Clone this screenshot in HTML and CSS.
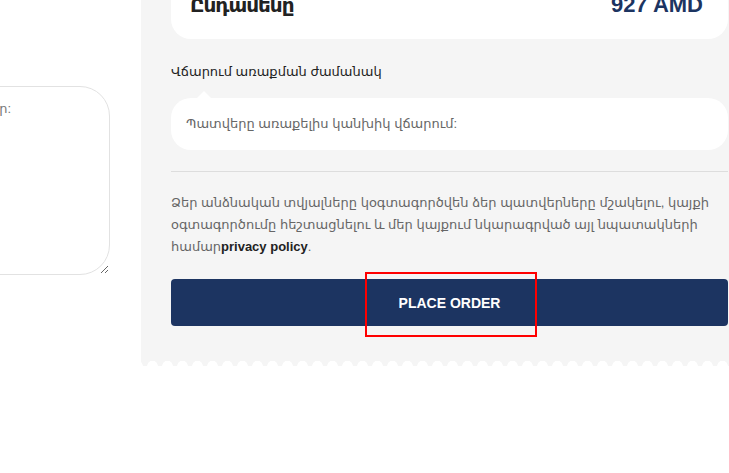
FILE: index.html
```html
<!DOCTYPE html>
<html lang="hy">
<head>
    <meta charset="UTF-8">
    <title>Checkout</title>
    <link rel="stylesheet" href="styles.css">
</head>
<body>
    <div class="checkout">
        <div class="notes-col">
            <textarea class="notes" placeholder="Պատվերի նշումներ:"></textarea>
        </div>
        <div class="summary">
            <div class="total-card">
                <span class="total-label">Ընդամենը</span>
                <span class="total-value">927 AMD</span>
            </div>
            <div class="pay-label">Վճարում առաքման ժամանակ</div>
            <div class="pay-bubble">Պատվերը առաքելիս կանխիկ վճարում:</div>
            <hr class="divider">
            <p class="privacy">Ձեր անձնական տվյալները կօգտագործվեն ձեր պատվերները մշակելու, կայքի օգտագործումը հեշտացնելու և մեր կայքում նկարագրված այլ նպատակների համար<b>privacy policy</b>.</p>
            <button class="place-order">PLACE ORDER</button>
            <div class="scallop"></div>
        </div>
    </div>
    <div class="highlight"></div>
</body>
</html>
```
FILE: styles.css
```css
body {
    margin: 0;
    background: #fff;
    font-family: "Liberation Sans", "DejaVu Sans", sans-serif;
    overflow: hidden;
}
.checkout {
    display: flex;
    align-items: flex-start;
}
.notes-col {
    width: 141px;
    flex-shrink: 0;
    padding-top: 86px;
}
.notes {
    display: block;
    margin-left: -160px;
    width: 270px;
    height: 189px;
    box-sizing: border-box;
    border: 1px solid #e2e2e2;
    border-radius: 30px;
    padding: 14px 98px 14px 20px;
    text-align: right;
    font-family: "Liberation Sans", "DejaVu Sans", sans-serif;
    font-size: 13px;
    color: #666;
    outline: none;
}
.notes::placeholder {
    color: #777;
}
.summary {
    flex: 1;
    background: #f5f5f5;
    padding: 0 1px 0 30px;
    position: relative;
}
.total-card {
    display: flex;
    justify-content: space-between;
    align-items: baseline;
    margin-top: -27px;
    padding: 20px 25px 22px 19px;
    background: #fff;
    border-radius: 20px;
    line-height: 24px;
    font-weight: bold;
}
.total-label {
    font-size: 20px;
    letter-spacing: -1px;
    color: #222;
}
.total-value {
    font-size: 22px;
    color: #1c3461;
}
.pay-label {
    margin-top: 23px;
    font-size: 13px;
    line-height: 20px;
    color: #222;
}
.pay-bubble {
    position: relative;
    margin-top: 16px;
    padding: 16px 15px;
    background: #fff;
    border-radius: 20px;
    font-size: 13px;
    line-height: 20px;
    color: #666;
}
.pay-bubble::before {
    content: "";
    position: absolute;
    top: -7px;
    left: 25px;
    border-left: 8px solid transparent;
    border-right: 8px solid transparent;
    border-bottom: 8px solid #fff;
}
.divider {
    margin: 21px 0 0;
    border: none;
    border-top: 1px solid #ddd;
}
.privacy {
    margin: 20px 0 0;
    font-size: 13px;
    line-height: 22px;
    color: #666;
}
.privacy b {
    color: #222;
}
.place-order {
    display: block;
    width: 100%;
    height: 47px;
    margin-top: 21px;
    border: none;
    border-radius: 4px;
    background: #1c3461;
    color: #fff;
    font-family: "Liberation Sans", sans-serif;
    font-size: 14px;
    font-weight: bold;
}
.scallop {
    height: 41px;
    margin: 0 -1px 0 -30px;
    background:
        radial-gradient(circle at 50% 100%, #fff 5px, transparent 5.5px) 4px 34px / 15px 6px repeat-x,
        linear-gradient(#f5f5f5 40px, #fff 40px);
}
.highlight {
    position: absolute;
    left: 365px;
    top: 272px;
    width: 168px;
    height: 61px;
    border: 2px solid #f00;
}
```
